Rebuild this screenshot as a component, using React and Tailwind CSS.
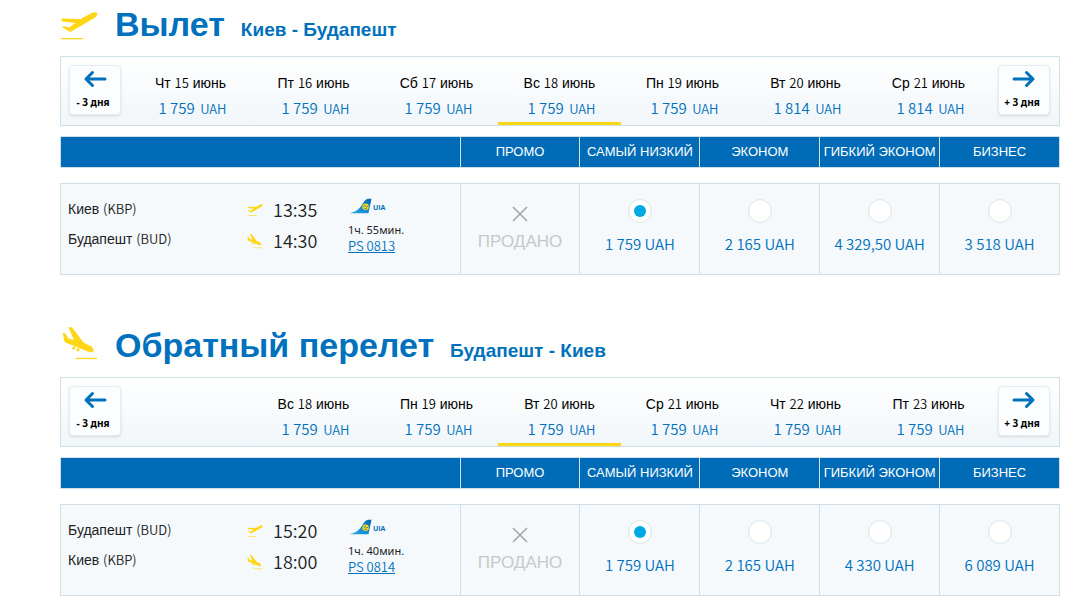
import { useState } from 'react';

const CLASSES = ['ПРОМО', 'САМЫЙ НИЗКИЙ', 'ЭКОНОМ', 'ГИБКИЙ ЭКОНОМ', 'БИЗНЕС'];

const flights = [
  {
    id: 'out',
    title: 'Вылет',
    route: 'Киев - Будапешт',
    icon: 'takeoff',
    days: [
      { date: 'Чт 15 июнь', price: '1 759' },
      { date: 'Пт 16 июнь', price: '1 759' },
      { date: 'Сб 17 июнь', price: '1 759' },
      { date: 'Вс 18 июнь', price: '1 759' },
      { date: 'Пн 19 июнь', price: '1 759' },
      { date: 'Вт 20 июнь', price: '1 814' },
      { date: 'Ср 21 июнь', price: '1 814' },
    ],
    from: 'Киев (KBP)',
    to: 'Будапешт (BUD)',
    departs: '13:35',
    arrives: '14:30',
    duration: '1ч. 55мин.',
    number: 'PS 0813',
    fares: [null, '1 759 UAH', '2 165 UAH', '4 329,50 UAH', '3 518 UAH'],
  },
  {
    id: 'back',
    title: 'Обратный перелет',
    route: 'Будапешт - Киев',
    icon: 'landing',
    days: [
      null,
      { date: 'Вс 18 июнь', price: '1 759' },
      { date: 'Пн 19 июнь', price: '1 759' },
      { date: 'Вт 20 июнь', price: '1 759' },
      { date: 'Ср 21 июнь', price: '1 759' },
      { date: 'Чт 22 июнь', price: '1 759' },
      { date: 'Пт 23 июнь', price: '1 759' },
    ],
    from: 'Будапешт (BUD)',
    to: 'Киев (KBP)',
    departs: '15:20',
    arrives: '18:00',
    duration: '1ч. 40мин.',
    number: 'PS 0814',
    fares: [null, '1 759 UAH', '2 165 UAH', '4 330 UAH', '6 089 UAH'],
  },
];

// latin letters and digits use a different face than the cyrillic text
function Mixed({ children }) {
  return children.split(/([0-9A-Za-z(),.:+]+)/).map((part, i) =>
    i % 2 ? <span key={i} className="font-['Noto_Sans_CJK_SC',sans-serif] text-[13px] leading-none font-[350]">{part}</span> : part
  );
}

function Takeoff({ className }) {
  return (
    <svg className={className} viewBox="0 0 38 28" fill="#ffd615" aria-hidden="true">
      <path d="M1.500 15L4.500 14.200L9 15.500L15.500 11L2 9.500Q1 7.800 2 6.400L20.500 7L32 .8Q36 -.8 37.300 1.500Q38 4.200 34 6.300L10.500 20Z" />
      <rect x="1" y="26" width="22" height="1.300" />
    </svg>
  );
}

function Landing({ className }) {
  return (
    <svg className={className} viewBox="0 0 36 34" fill="#ffd615" aria-hidden="true">
      <path d="M.8 7L3 7L6.500 12.500L12 14L6.500 1.500Q9 .5 10.500 2L21.500 16.500L29.500 20.500Q33 24 31 26Q29.500 27 25 25.300L3.500 16.500Q2 15.500 1.800 13Z" />
      <circle cx="11.800" cy="22" r="1.600" />
      <circle cx="16" cy="23.800" r="1.600" />
      <rect x="14" y="31.800" width="21" height="1.300" />
    </svg>
  );
}

function Arrow({ className }) {
  return (
    <svg className={className} viewBox="0 0 24 18" fill="none" stroke="#0071bc" strokeWidth="3" strokeLinecap="round" strokeLinejoin="round" aria-hidden="true">
      <path d="M22 9H3M9.500 2.500L3 9L9.500 15.500" />
    </svg>
  );
}

function UiaLogo() {
  return (
    <svg className="h-4 w-10" viewBox="0 0 40 16" role="img" aria-label="UIA">
      <defs>
        <linearGradient id="tail" x1="0" y1="1" x2="1" y2="0">
          <stop offset="0" stopColor="#2aaae8" />
          <stop offset="1" stopColor="#0068b6" />
        </linearGradient>
      </defs>
      <path d="M1.500 15.200Q9 13.500 12 9.500L16.500 3Q18 1 20 .8H23.500L20.500 15.200Z" fill="url(#tail)" />
      <circle cx="17.600" cy="8.800" r="3.300" fill="#ffd21c" />
      <path d="M15.500 8.200Q17.500 7 18.500 8.500H20.300M16 10.200Q17.500 11 19 10" fill="none" stroke="#0078c3" strokeWidth=".7" />
      <text x="25" y="12" fontSize="7" fontWeight="700" fill="#0071bc" fontFamily="Open Sans, sans-serif">UIA</text>
    </svg>
  );
}

function ShiftButton({ label, forward }) {
  return (
    <button type="button" className="flex h-[50px] w-[52px] shrink-0 flex-col items-center rounded border border-[#e6edf2] bg-[#fbfdfe] pt-1 shadow">
      <Arrow className={forward ? 'h-[18px] w-6 rotate-180' : 'h-[18px] w-6'} />
      <span className="mt-1 pr-1 font-['Noto_Sans',sans-serif] text-[10px] leading-5 font-bold text-black">{label}</span>
    </button>
  );
}

function DateBar({ days, selected, onSelect }) {
  return (
    <div className="flex h-[70px] border border-[#d0dfe6] bg-linear-to-b from-white to-[#f1f6fa] pr-[9px] pl-2">
      <div className="pt-2"><ShiftButton label="- 3 дня" /></div>
      <div className="grid flex-1 grid-cols-7 px-2">
        {days.map((day, i) =>
          day ? (
            <button
              key={day.date}
              type="button"
              aria-pressed={i === selected}
              onClick={() => onSelect(i)}
              className={`border-b-3 pt-[10px] text-sm ${i === selected ? 'border-[#ffd615]' : 'border-transparent'}`}
            >
              <span className="block h-[27px] leading-7 text-black"><Mixed>{day.date}</Mixed></span>
              <span className="block h-6 pl-1 font-['Noto_Sans_CJK_SC',sans-serif] text-[15px] leading-6 font-[350] text-[#0071bc]">
                {day.price} <span className="pl-0.5 text-[13px] leading-none">UAH</span>
              </span>
            </button>
          ) : (
            <div key={i} />
          )
        )}
      </div>
      <div className="pt-2"><ShiftButton label="+ 3 дня" forward /></div>
    </div>
  );
}

function FareCell({ flight, fare, index }) {
  if (!fare) {
    return (
      <td className="border border-[#d0dfe6] p-0 text-center align-top">
        <svg className="mx-auto mt-[22px] size-4" viewBox="0 0 16 16" stroke="#a3a3a3" strokeWidth="1.5" aria-hidden="true">
          <path d="M1 1L15 15M15 1L1 15" />
        </svg>
        <span className="mt-2 block text-[17px] leading-6 text-[#c8c8c8]">ПРОДАНО</span>
      </td>
    );
  }
  return (
    <td className="border border-[#d0dfe6] p-0 text-center align-top">
      <label className="flex flex-col items-center gap-2 pt-[15px]">
        <input
          type="radio"
          name={flight.id}
          defaultChecked={index === 1}
          className="grid size-6 appearance-none place-content-center rounded-full border border-[#dce5ea] bg-white before:size-3 before:rounded-full checked:before:bg-[#00a9e4]"
        />
        <span className="pt-px font-['Noto_Sans_CJK_SC',sans-serif] text-[15px] leading-6 font-[350] text-[#0071bc]">{fare}</span>
      </label>
    </td>
  );
}

function Flight({ flight }) {
  const [selected, setSelected] = useState(3);
  const Icon = flight.icon === 'takeoff' ? Takeoff : Landing;

  return (
    <section>
      <div className="flex h-14 items-center">
        <div className="w-[55px]">
          <Icon className={flight.icon === 'takeoff' ? 'mb-1 h-7 w-[38px]' : 'ml-0.5 mb-3 h-[34px] w-9'} />
        </div>
        <h2 className="mb-2 flex items-baseline gap-4 text-[34px] font-bold text-[#0071bc]">
          {flight.title}
          <span className="text-[19px]">{flight.route}</span>
        </h2>
      </div>

      <DateBar days={flight.days} selected={selected} onSelect={setSelected} />

      <table className="mt-[10px] w-full table-fixed border-collapse">
        <thead>
          <tr className="h-[31px] bg-[#006cb7] text-[13px] text-white">
            <th className="w-2/5 border border-[#d0dfe6]" aria-label="Рейс" />
            {CLASSES.map((name) => (
              <th key={name} scope="col" className="border border-[#d0dfe6] p-0 leading-5 font-normal whitespace-nowrap">{name}</th>
            ))}
          </tr>
        </thead>
        <tbody>
          <tr aria-hidden="true"><td colSpan={6} className="h-4 p-0" /></tr>
          <tr className="h-[91px] bg-[#f5f9fc]">
            <td className="border border-[#d0dfe6] p-0 align-top">
              <div className="flex pt-[10px] pl-[7px]">
                <div className="w-[179px] text-sm leading-[30px] text-[#222]">
                  <div className="h-[30px]"><Mixed>{flight.from}</Mixed></div>
                  <div className="h-[30px]"><Mixed>{flight.to}</Mixed></div>
                </div>
                <div className="w-[101px] font-['Noto_Sans_CJK_SC',sans-serif] text-lg leading-[31px] font-[350] text-[#222]">
                  <div className="flex items-center gap-[10px]"><Takeoff className="h-3 w-4" />{flight.departs}</div>
                  <div className="flex items-center gap-[10px]"><Landing className="h-4 w-4" />{flight.arrives}</div>
                </div>
                <div className="pt-1 text-[#222]">
                  <UiaLogo />
                  <div className="mt-1 h-5 font-['Noto_Sans',sans-serif] text-[11px] leading-6">{flight.duration}</div>
                  <a href="#flight" className="block font-['Noto_Sans_CJK_SC',sans-serif] text-[13px] leading-4 font-[350] text-[#0071bc] underline">{flight.number}</a>
                </div>
              </div>
            </td>
            {flight.fares.map((fare, i) => (
              <FareCell key={i} flight={flight} fare={fare} index={i} />
            ))}
          </tr>
        </tbody>
      </table>
    </section>
  );
}

export default function App() {
  return (
    <main className="mr-[13px] ml-[60px] flex flex-col gap-[46px] font-['Liberation_Sans',Arial,sans-serif]">
      {flights.map((flight) => (
        <Flight key={flight.id} flight={flight} />
      ))}
    </main>
  );
}
